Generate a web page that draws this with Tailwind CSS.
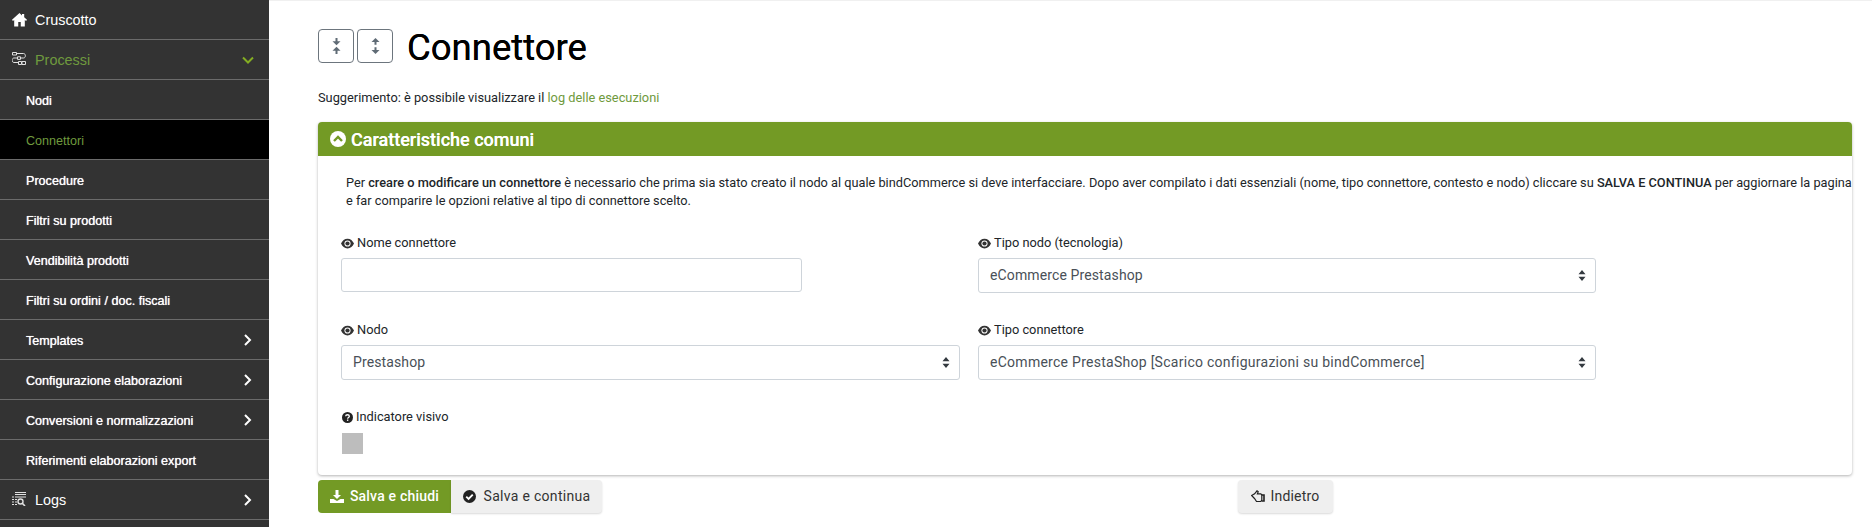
<!doctype html>
<html lang="it">

<head>
  <meta charset="utf-8">
  <title>Connettore</title>
  <script src="https://cdn.jsdelivr.net/npm/@tailwindcss/browser@4"></script>
</head>

<body class="h-[527px] w-[1872px] overflow-hidden bg-white font-['Roboto',sans-serif] text-[#212529]">
  <div class="flex h-[527px]">
    <!-- sidebar -->
    <nav class="h-full w-[269px] shrink-0 bg-[#333333] font-['Liberation_Sans',sans-serif] text-white">
      <a class="flex h-10 items-center border-b border-[#6b6b6b] pl-3 pt-[3px] text-[14.4px]">
        <svg class="mr-[8px] -mt-[4px] h-[15px] w-[15px]" viewBox="0 0 24 24" fill="#fff"><path d="M12 1.500 0 12.500l1.500 1.800L3.500 12.600V23h6.500v-7h4v7h6.500V12.600l2 1.700 1.500-1.800-4.500-4V3h-3.500v2.400z"/></svg>
        Cruscotto
      </a>
      <a class="flex h-10 items-center border-b border-[#6b6b6b] pl-3 pr-[15px] pt-[3px] text-[14.4px] text-[#6f9a3e]">
        <svg class="mr-[9px] -mt-[5px] h-[14px] w-[14px]" viewBox="0 0 14 14" fill="none" stroke="#e0e0e0" stroke-width="1"><path d="M.5.500h4v2.500h-4zM4.500 1.500h7c2.500 0 2.500 4.500 0 4.500H8.500M5.500 6H2c-2.500 0-2.500 4.500 0 4.500h4.500M5.500 4.800h3v2.600h-3zM6.500 9.500h3v3h-3zM10 9.500h3.500v3H10z"/></svg>
        Processi
        <svg class="ml-auto -mt-[2px] h-3 w-3" viewBox="0 0 12 12" fill="none" stroke="#84ad23" stroke-width="2"><path d="M1 3.500l5 5 5-5"/></svg>
      </a>
      <a class="flex h-10 items-center border-b border-[#6b6b6b] pl-[26px] pt-[3px] text-[12.6px] [text-shadow:0_0_0.7px_#fff]">Nodi</a>
      <a class="flex h-10 items-center border-b border-[#6b6b6b] bg-black pl-[26px] pt-[3px] text-[12.6px] text-[#6f9a3e]">Connettori</a>
      <a class="flex h-10 items-center border-b border-[#6b6b6b] pl-[26px] pt-[3px] text-[12.6px] [text-shadow:0_0_0.7px_#fff]">Procedure</a>
      <a class="flex h-10 items-center border-b border-[#6b6b6b] pl-[26px] pt-[3px] text-[12.6px] [text-shadow:0_0_0.7px_#fff]">Filtri su prodotti</a>
      <a class="flex h-10 items-center border-b border-[#6b6b6b] pl-[26px] pt-[3px] text-[12.6px] [text-shadow:0_0_0.7px_#fff]">Vendibilità prodotti</a>
      <a class="flex h-10 items-center border-b border-[#6b6b6b] pl-[26px] pt-[3px] text-[12.6px] [text-shadow:0_0_0.7px_#fff]">Filtri su ordini / doc. fiscali</a>
      <a class="flex h-10 items-center border-b border-[#6b6b6b] pl-[26px] pr-[15px] pt-[3px] text-[12.6px] [text-shadow:0_0_0.7px_#fff]">
        Templates
        <svg class="ml-auto -mt-[2px] h-3 w-3" viewBox="0 0 12 12" fill="none" stroke="#fff" stroke-width="2"><path d="M3 1l5 5-5 5"/></svg>
      </a>
      <a class="flex h-10 items-center border-b border-[#6b6b6b] pl-[26px] pr-[15px] pt-[3px] text-[12.6px] [text-shadow:0_0_0.7px_#fff]">
        Configurazione elaborazioni
        <svg class="ml-auto -mt-[2px] h-3 w-3" viewBox="0 0 12 12" fill="none" stroke="#fff" stroke-width="2"><path d="M3 1l5 5-5 5"/></svg>
      </a>
      <a class="flex h-10 items-center border-b border-[#6b6b6b] pl-[26px] pr-[15px] pt-[3px] text-[12.6px] [text-shadow:0_0_0.7px_#fff]">
        Conversioni e normalizzazioni
        <svg class="ml-auto -mt-[2px] h-3 w-3" viewBox="0 0 12 12" fill="none" stroke="#fff" stroke-width="2"><path d="M3 1l5 5-5 5"/></svg>
      </a>
      <a class="flex h-10 items-center border-b border-[#6b6b6b] pl-[26px] pt-[3px] text-[12.6px] [text-shadow:0_0_0.7px_#fff]">Riferimenti elaborazioni export</a>
      <a class="flex h-10 items-center border-b border-[#6b6b6b] pl-3 pr-[15px] pt-[3px] text-[14.4px]">
        <svg class="mr-[9px] -mt-[5px] h-[14px] w-[14px]" viewBox="0 0 14 14" fill="none" stroke="#e0e0e0" stroke-width="1.100"><path d="M3 .500h11M3 2.500h11M0 5h2M3 5h11M0 7.500h2M3 7.500h2M0 10h2M3 10h2M0 12.500h2M3 12.500h2"/><circle cx="8.500" cy="9.500" r="2.500" stroke-width="1.400"/><path d="M10.500 11.500l2.500 2.500" stroke-width="1.600"/></svg>
        Logs
        <svg class="ml-auto -mt-[2px] h-3 w-3" viewBox="0 0 12 12" fill="none" stroke="#fff" stroke-width="2"><path d="M3 1l5 5-5 5"/></svg>
      </a>
    </nav>

    <!-- main -->
    <main class="min-w-0 flex-1 border-t border-[#f0f0f0] pl-[49px] pr-[20px]">
      <div class="flex h-[89px] items-start pt-[28px]">
        <button class="flex h-[34px] w-[36px] items-center justify-center rounded-[4px] border border-[#6c757d]">
          <svg class="h-4 w-[9px]" viewBox="0 0 9 16" fill="#5f6b75"><path d="M3.500 0h2v3.300h3L4.500 7.300.5 3.300h3zM4.500 8.700l4 4h-3V16h-2v-3.300h-3z"/></svg>
        </button>
        <button class="ml-[3px] flex h-[34px] w-[36px] items-center justify-center rounded-[4px] border border-[#6c757d]">
          <svg class="h-4 w-[9px]" viewBox="0 0 9 16" fill="#5f6b75"><path d="M4.500 0l4 4h-3v2.800h-2V4h-3zM3.500 9.200h2V12h3l-4 4-4-4h3z"/></svg>
        </button>
        <h1 class="ml-[14px] text-[36.5px] leading-[37px] font-normal text-black [text-shadow:0_0_0.5px_#000]">Connettore</h1>
      </div>

      <p class="h-[32px] text-[12.8px] leading-[16px]">Suggerimento: è possibile visualizzare il <a class="text-[#6f9a3e]">log delle esecuzioni</a></p>

      <section class="h-[353px] rounded-[4px] bg-white shadow-[0_1px_3px_rgba(0,0,0,0.3)]">
        <h2 class="flex h-[34px] items-center rounded-t-[4px] bg-[#739a25] pl-3 text-[18px] font-medium text-white [text-shadow:0_0_0.5px_#fff]">
          <svg class="mr-[5px] h-4 w-4" viewBox="0 0 16 16"><circle cx="8" cy="8" r="8" fill="#fff"/><path d="M4 10l4-4 4 4" fill="none" stroke="#739a25" stroke-width="2.400"/></svg>
          Caratteristiche comuni
        </h2>
        <div class="pl-[23px] pt-[18px]">
          <p class="pl-[5px] text-[12.75px] leading-[18px]">Per <b class="font-medium">creare o modificare un connettore</b> è necessario che prima sia stato creato il nodo al quale bindCommerce si deve interfacciare. Dopo aver compilato i dati essenziali (nome, tipo connettore, contesto e nodo) cliccare su <b class="font-medium">SALVA E CONTINUA</b> per aggiornare la pagina e far comparire le opzioni relative al tipo di connettore scelto.</p>

          <div class="mt-[24px] grid grid-cols-[619px_618px] gap-x-[18px]">
            <div class="h-[87px]">
              <label class="flex h-[18px] items-center text-[12.8px]">
                <svg class="mr-[3px] h-[11px] w-[13px]" viewBox="0 0 16 12"><path d="M8 0C4.500 0 1.500 2.500 0 6c1.500 3.500 4.500 6 8 6s6.500-2.500 8-6c-1.500-3.500-4.500-6-8-6z" fill="#333"/><circle cx="8" cy="6" r="3.800" fill="#fff"/><circle cx="8" cy="6" r="2.600" fill="#333"/></svg>
                Nome connettore
              </label>
              <input class="mt-[6px] block h-[34px] w-[461px] rounded-[3px] border border-[#ced4da] bg-white" type="text">
            </div>
            <div class="h-[87px]">
              <label class="flex h-[18px] items-center text-[12.8px]">
                <svg class="mr-[3px] h-[11px] w-[13px]" viewBox="0 0 16 12"><path d="M8 0C4.500 0 1.500 2.500 0 6c1.500 3.500 4.500 6 8 6s6.500-2.500 8-6c-1.500-3.500-4.500-6-8-6z" fill="#333"/><circle cx="8" cy="6" r="3.800" fill="#fff"/><circle cx="8" cy="6" r="2.600" fill="#333"/></svg>
                Tipo nodo (tecnologia)
              </label>
              <div class="mt-[6px] flex h-[35px] items-center rounded-[3px] border border-[#ced4da] pl-[11px] pr-[9px] text-[14px] tracking-[0.12px] text-[#495057]">
                eCommerce Prestashop
                <svg class="ml-auto h-[11px] w-2" viewBox="0 0 8 11" fill="#343a40"><path d="M4 0l3.500 4.300h-7zM4 11L.5 6.700h7z"/></svg>
              </div>
            </div>
            <div class="h-[87px]">
              <label class="flex h-[18px] items-center text-[12.8px]">
                <svg class="mr-[3px] h-[11px] w-[13px]" viewBox="0 0 16 12"><path d="M8 0C4.500 0 1.500 2.500 0 6c1.500 3.500 4.500 6 8 6s6.500-2.500 8-6c-1.500-3.500-4.500-6-8-6z" fill="#333"/><circle cx="8" cy="6" r="3.800" fill="#fff"/><circle cx="8" cy="6" r="2.600" fill="#333"/></svg>
                Nodo
              </label>
              <div class="mt-[6px] flex h-[35px] items-center rounded-[3px] border border-[#ced4da] pl-[11px] pr-[9px] text-[14px] tracking-[0.12px] text-[#495057]">
                Prestashop
                <svg class="ml-auto h-[11px] w-2" viewBox="0 0 8 11" fill="#343a40"><path d="M4 0l3.500 4.300h-7zM4 11L.5 6.700h7z"/></svg>
              </div>
            </div>
            <div class="h-[87px]">
              <label class="flex h-[18px] items-center text-[12.8px]">
                <svg class="mr-[3px] h-[11px] w-[13px]" viewBox="0 0 16 12"><path d="M8 0C4.500 0 1.500 2.500 0 6c1.500 3.500 4.500 6 8 6s6.500-2.500 8-6c-1.500-3.500-4.500-6-8-6z" fill="#333"/><circle cx="8" cy="6" r="3.800" fill="#fff"/><circle cx="8" cy="6" r="2.600" fill="#333"/></svg>
                Tipo connettore
              </label>
              <div class="mt-[6px] flex h-[35px] items-center rounded-[3px] border border-[#ced4da] pl-[11px] pr-[9px] text-[14px] tracking-[0.27px] text-[#495057]">
                eCommerce PrestaShop [Scarico configurazioni su bindCommerce]
                <svg class="ml-auto h-[11px] w-2" viewBox="0 0 8 11" fill="#343a40"><path d="M4 0l3.500 4.300h-7zM4 11L.5 6.700h7z"/></svg>
              </div>
            </div>
            <div>
              <label class="flex h-[18px] items-center text-[12.8px]">
                <svg class="mr-[3px] ml-[1px] h-[11px] w-[11px]" viewBox="0 0 12 12"><circle cx="6" cy="6" r="6" fill="#222"/><path d="M4 4.600C4 3.500 5 3 6 3s2 .600 2 1.700C8 6 6.200 6 6.200 7.300" fill="none" stroke="#fff" stroke-width="1.400"/><rect x="5.400" y="8.200" width="1.500" height="1.500" fill="#fff"/></svg>
                Indicatore visivo
              </label>
              <div class="mt-[7px] ml-[1px] h-[21px] w-[21px] bg-[#bdbdbd]"></div>
            </div>
          </div>
        </div>
      </section>

      <div class="mt-[5px] flex h-[34px] text-[14px]">
        <button class="flex h-[33px] w-[133px] items-center justify-center rounded-l-[4px] bg-[#739a25] font-medium tracking-[0.2px] text-white">
          <svg class="mr-[6px] h-[13px] w-[14px]" viewBox="0 0 14 13" fill="#fff"><path d="M5.500 0h3v5H11L7 9 3 5h2.500zM0 9h3.500L7 11l3.500-2H14v4H0z"/></svg>
          Salva e chiudi
        </button>
        <button class="flex h-[33px] w-[151px] items-center justify-center rounded-r-[4px] bg-[#efefef] tracking-[0.3px] text-[#333] shadow-[0_1px_2px_rgba(0,0,0,0.15)]">
          <svg class="mr-[8px] h-[13px] w-[13px]" viewBox="0 0 14 14"><circle cx="7" cy="7" r="7" fill="#222"/><path d="M3.500 7.200l2.500 2.500 4.500-4.700" fill="none" stroke="#fff" stroke-width="2"/></svg>
          Salva e continua
        </button>
        <button class="ml-[636px] flex h-[33px] w-[95px] items-center justify-center rounded-[4px] bg-[#efefef] tracking-[0.2px] text-[#333] shadow-[0_1px_2px_rgba(0,0,0,0.15)]">
          <svg class="mr-[5px] h-[13px] w-[14px]" viewBox="0 0 14 13" fill="none" stroke="#222" stroke-width="1.200"><path d="M.6 5.500l3-1.700L6 .8l1.200 1-.8 2h3.400l1 1v5.200l-1 1.500H5.500L3.500 8.500z"/><path d="M10.600 5h2.400v6h-2.400" stroke-width="1.600"/></svg>
          Indietro
        </button>
      </div>
    </main>
  </div>
</body>

</html>
